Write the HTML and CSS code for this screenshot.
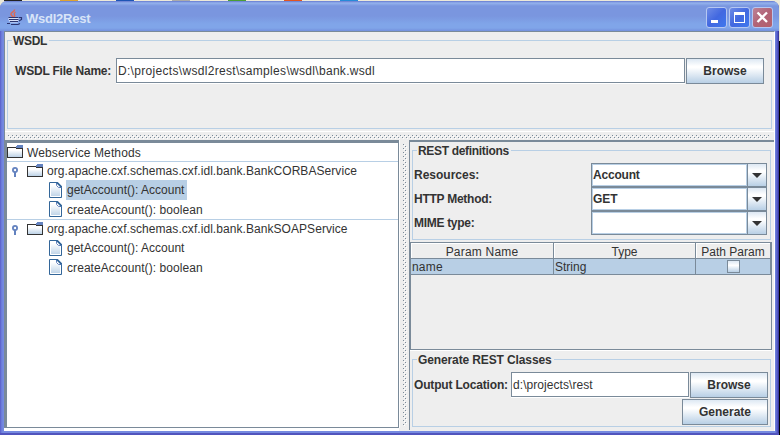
FILE: index.html
```
<!DOCTYPE html>
<html lang="en">
<head>
<meta charset="utf-8">
<title>Wsdl2Rest</title>
<link rel="stylesheet" href="styles.css">
</head>
<body>
<svg width="0" height="0" class="defs">
  <defs>
    <linearGradient id="fg" x1="0" y1="0" x2="0" y2="1"><stop offset="0.2" stop-color="#fff"/><stop offset="1" stop-color="#b8cfe5"/></linearGradient>
    <symbol id="folder" viewBox="0 0 16 14" shape-rendering="crispEdges">
      <rect x="0.5" y="3.5" width="15" height="9" fill="url(#fg)" stroke="#333"/>
      <path d="M0 2h9v1h-9z" fill="#333"/><path d="M1 3h8v1h-8z" fill="#fff"/>
      <path d="M10 0h6v3h-7v-2h1z" fill="#6382bf"/><path d="M9 3h6v1h-6z" fill="#333"/>
    </symbol>
    <symbol id="leaf" viewBox="0 0 13 16">
      <path d="M.5 .5h8l4 4v11H.5z" fill="url(#fg)" stroke="#336699"/>
      <path d="M1.500 1.500h6l4 4v9H1.500z" fill="none" stroke="#fff"/>
      <path d="M7.500 1v2.500l2 2h3" fill="none" stroke="#6382bf"/>
      <path d="M8 .5l4.500 4.500" stroke="#336699" stroke-width="1.800"/>
    </symbol>
    <symbol id="knob" viewBox="0 0 6 10">
      <circle cx="3" cy="3" r="2.100" fill="#fff" stroke="#6382bf" stroke-width="1.800"/><path d="M2 5h2v5h-2z" fill="#6382bf"/>
    </symbol>
  </defs>
</svg>
<div class="desktop"><i class="d1"></i><i class="d2"></i><i class="d3"></i><i class="d4"></i><i class="d5"></i><i class="d6"></i><i class="d7"></i></div>
<div class="window">
  <header class="titlebar">
    <svg class="java" width="17" height="17" viewBox="0 0 17 17" fill="none">
      <path d="M7.500 .5C8 3 3 3.500 4 5.500L6 8M8.500 3C5 5.500 9.500 5 7 8" stroke="#dc6a55" stroke-width="1.500"/>
      <path d="M1.500 8.500h10v2.500l-1 2.500H3.500l-2-2.500z" fill="#d9e1f7"/>
      <path d="M1.500 8.500h10M2 10.500h9.500M3 12.500h8M0 14.500h3M4 15.500h7l2-1M12 8.500h2.500v2L12 12" stroke="#2b3470" stroke-width="1.200"/>
    </svg>
    <span class="title">Wsdl2Rest</span>
    <span class="wbtn"><svg width="20" height="20"><path d="M5 13h7v3H5z" fill="#fff"/></svg></span>
    <span class="wbtn"><svg width="20" height="20"><path d="M5 5h11v11H5zM6 8v7h9V8z" fill="#fff" fill-rule="evenodd"/></svg></span>
    <span class="wbtn close"><svg width="20" height="20"><path d="M5.500 5.500l9.500 9.500M15 5.500L5.500 15" stroke="#fff" stroke-width="2.300"/></svg></span>
  </header>
  <main class="content">
    <section class="top">
      <div class="group wsdl">
        <span class="legend l-wsdl">WSDL</span>
        <label class="b t-file">WSDL File Name:</label>
        <div class="field"><span class="t-path">D:\projects\wsdl2rest\samples\wsdl\bank.wsdl</span></div>
        <div class="button">Browse</div>
      </div>
    </section>
    <div class="hdivider"><svg width="761" height="4"><defs><pattern id="dots" width="4" height="4" patternUnits="userSpaceOnUse"><path d="M0 0h1v1H0zM2 2h1v1H2z" fill="#7a8a99"/><path d="M1 1h1v1H1zM3 3h1v1H3z" fill="#fff"/></pattern></defs><rect width="761" height="4" fill="url(#dots)"/></svg></div>
    <div class="split">
      <section class="tree">
        <div class="row root"><svg width="16" height="14"><use href="#folder"/></svg><span class="t-root">Webservice Methods</span></div>
        <div class="service">
          <div class="row svc"><svg class="knob" width="6" height="10"><use href="#knob"/></svg><svg width="16" height="14"><use href="#folder"/></svg><span class="t-svc">org.apache.cxf.schemas.cxf.idl.bank.BankCORBAService</span></div>
          <div class="row m1"><svg width="13" height="16"><use href="#leaf"/></svg><span class="sel">getAccount(): Account</span></div>
          <div class="row m2"><svg width="13" height="16"><use href="#leaf"/></svg><span class="t-create">createAccount(): boolean</span></div>
        </div>
        <div class="service">
          <div class="row svc"><svg class="knob" width="6" height="10"><use href="#knob"/></svg><svg width="16" height="14"><use href="#folder"/></svg><span class="t-svc">org.apache.cxf.schemas.cxf.idl.bank.BankSOAPService</span></div>
          <div class="row m1"><svg width="13" height="16"><use href="#leaf"/></svg><span>getAccount(): Account</span></div>
          <div class="row m2"><svg width="13" height="16"><use href="#leaf"/></svg><span class="t-create">createAccount(): boolean</span></div>
        </div>
      </section>
      <div class="vdivider"><svg width="4" height="282"><rect width="4" height="282" fill="url(#dots)"/></svg></div>
      <section class="right">
        <div class="group rest">
          <span class="legend l-rest">REST definitions</span>
          <div class="frow"><label class="b">Resources:</label><div class="combo"><span class="b t-acc">Account</span><i><svg width="10" height="5"><path d="M0 0h10L5 5z" fill="#333"/></svg></i></div></div>
          <div class="frow"><label class="b t-http">HTTP Method:</label><div class="combo"><span class="b">GET</span><i><svg width="10" height="5"><path d="M0 0h10L5 5z" fill="#333"/></svg></i></div></div>
          <div class="frow"><label class="b t-mime">MIME type:</label><div class="combo"><span></span><i><svg width="10" height="5"><path d="M0 0h10L5 5z" fill="#333"/></svg></i></div></div>
        </div>
        <div class="table">
          <div class="th"><span class="t-pn">Param Name</span></div><div class="th"><span>Type</span></div><div class="th"><span>Path Param</span></div>
          <div class="td"><span class="t-name">name</span></div><div class="td"><span>String</span></div><div class="td c"><i class="check"></i></div>
        </div>
        <div class="group gen">
          <span class="legend l-gen">Generate REST Classes</span>
          <div class="grow"><label class="b t-out">Output Location:</label><div class="field"><span class="t-dir">d:\projects\rest</span></div><div class="button">Browse</div></div>
          <div class="button generate">Generate</div>
        </div>
      </section>
    </div>
  </main>
</div>
</body>
</html>
```
FILE: styles.css
```
* { box-sizing: border-box; }
body { margin: 0; width: 780px; height: 435px; overflow: hidden; background: linear-gradient(#ece9d8 41px, #000 41px); font: 12px/14px "Liberation Sans", sans-serif; color: #333; }
.defs { position: absolute; }
svg { display: block; flex: none; }
span, label { white-space: nowrap; }
.desktop { height: 1px; background: #ece9d8; display: flex; gap: 38px; padding-left: 4px; }
.desktop i { height: 1px; width: 18px; background: #222; }
.desktop .d2 { background: #dfa330; }
.desktop .d3 { background: #1e55b5; }
.desktop .d4 { background: #aaa; }
.desktop .d5 { background: #4a9e35; }
.desktop .d6 { background: #e25422; }
.desktop .d7 { background: #268bd8; }
.window { width: 779px; height: 434px; border-radius: 7px 7px 0 0; overflow: hidden; background: linear-gradient(90deg, #5558c4 0, #6876d8 1px, #758ae0 3px, #758ae0 775px, #6272d4 776px, #4a4cbe 778px, #2b2a80 779px); padding: 0 4px; box-shadow: inset 0 -2px #5154bd; }
.titlebar { height: 30px; margin: 0 -4px; padding: 0 6px 0 7px; display: flex; align-items: center; background: linear-gradient(#6579cf 0, #94b3ed 2px, #7a96df 5px, #7a96df 15px, #80a5e9 23px, #80a5e9 27px, #7390dd 30px); }
.java { margin-top: 3px; }
.title { flex: 1; padding-left: 2px; font: bold 13px/16px "Liberation Sans", sans-serif; color: #d8e4f8; letter-spacing: -.25px; margin-top: 5px; }
.wbtn { width: 21px; height: 21px; margin-left: 2px; margin-top: 3px; border: 1px solid #b5c7f2; border-radius: 3px; background: linear-gradient(135deg, #6f8ce6, #4268e0 50%, #3e78ee); }
.wbtn svg { margin: -1px 0 0 -1px; }
.close { background: linear-gradient(135deg, #bd8196, #b16477 50%, #b4606a); }
.content { height: 400px; background: #eee; border-top: 1px solid #7a8a99; width: 771px; border-right: 1px solid #fff; border-left: 1px solid #7a8a99; }
.top { height: 100px; padding: 8px 2px 0 2px; border-bottom: 1px solid #fff; }
.group { position: relative; border: 1px solid #b8cfe5; }
.legend { position: absolute; top: -7px; left: 4px; background: #eee; font-weight: bold; padding: 0 2px 0 1px; }
.l-wsdl { letter-spacing: -.3px; }
.l-rest { letter-spacing: -.32px; }
.l-gen { letter-spacing: -.12px; }
.wsdl { height: 89px; display: flex; padding: 17px 7px 0 7px; align-items: flex-start; }
.b { font-weight: bold; }
.t-file { width: 101px; line-height: 27px; letter-spacing: -.2px; }
.t-path { letter-spacing: .31px; }
.t-dir { letter-spacing: .06px; }
.field { height: 25px; border: 1px solid #7a8a99; background: #fff; box-shadow: 0 1px #fff; line-height: 25px; padding-left: 1px; flex: 1; }
.button { width: 78px; height: 26px; margin-left: 1px; border: 1px solid #7a8a99; text-align: center; line-height: 25px; font-weight: bold; background: linear-gradient(#dde8f3 0, #fff 30%, #fff 36%, #b8cfe5); }
.hdivider { height: 8px; padding: 3px 3px; }
.split { display: grid; grid-template-columns: 395px 9px 1fr; height: 291px; margin-left: -1px; }
.tree { background: #fff; border: solid #7a8a99; border-width: 3px 1px 1px 3px; height: 288px; box-shadow: 0 3px #fff, 1px 0 #fff; }
.row { display: flex; align-items: center; }
.root { height: 18px; }
.root span { margin: 2px 0 0 4px; letter-spacing: .11px; }
.service { border-top: 1px solid #b8cfe5; height: 58px; }
.svc { height: 18px; padding-left: 5px; }
.svc svg + svg { margin-left: 9px; }
.svc span { margin: 0 0 0 4px; letter-spacing: .06px; }
.svc .knob { margin-top: 1px; }
.m1, .m2 { padding-left: 42px; height: 19px; }
.m2 { height: 20px; }
.sel { background: #b8cfe5; height: 20px; line-height: 20px; margin: 0 0 0 4px; padding: 0 2px 0 1px; width: 121px; }
.m1 > span:not(.sel) { margin: 0 0 0 5px; }
.m2 > span { margin: 1px 0 0 5px; letter-spacing: .07px; }
.vdivider { padding: 4px 2px 0 2px; margin-left: 2px; width: 8px; }
.right { border-left: 1px solid #7a8a99; border-top: 2px solid #7a8a99; padding: 8px 2px 0 2px; height: 290px; margin-left: 1px; }
.rest { height: 90px; padding: 12px 3px 0 1px; width: 359px; }
.frow { display: flex; height: 24px; }
.frow label { width: 177px; line-height: 25px; }
.frow .t-http { letter-spacing: -.25px; }
.frow .t-mime { letter-spacing: -.3px; }
.combo { flex: 1; border: 1px solid #7a8a99; background: #fff; display: flex; }
.combo span { flex: 1; border: 1px solid #b8cfe5; line-height: 21px; }
.combo .t-acc { letter-spacing: -.2px; }
.combo i { width: 19px; border-left: 1px solid #7a8a99; display: flex; align-items: center; justify-content: center; background: linear-gradient(#dde8f3 0, #fff 30%, #fff 36%, #b8cfe5); padding-top: 1px; }
.table { margin: 2px 0 0 -2px; width: 362px; height: 108px; border: 1px solid #7a8a99; box-shadow: 0 1px #fff; display: grid; grid-template-columns: 143px 142px 75px; grid-template-rows: 16px 16px; }
.th { border: solid #7a8a99; border-width: 0 1px 1px 0; box-shadow: inset 1px 1px #fff; text-align: center; line-height: 18px; }
.t-pn { letter-spacing: .2px; }
.t-name { letter-spacing: .2px; }
.td { border: solid #7a8a99; border-width: 0 1px 1px 0; background: #b8cfe5; line-height: 17px; padding-left: 1px; }
.c { display: flex; justify-content: center; }
.check { width: 13px; height: 13px; margin-top: 1px; border: 1px solid #7a8a99; background: linear-gradient(#dde8f3, #fff 40%, #b8cfe5); }
.gen { height: 68px; width: 359px; margin-top: 9px; padding: 12px 2px 0 1px; }
.grow { display: flex; }
.t-out { width: 97px; line-height: 27px; letter-spacing: -.17px; }
.generate { width: 86px; margin-left: auto; }
```
